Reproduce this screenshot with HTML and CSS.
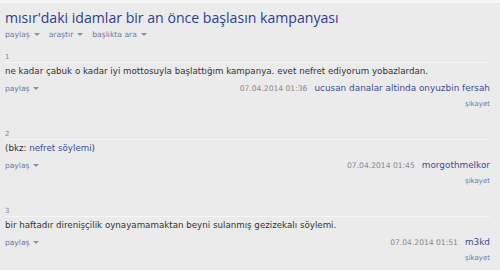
FILE: index.html
```html
<!DOCTYPE html>
<html>
  <head>
    <title>mısır'daki idamlar bir an önce başlasın kampanyası</title>
    <link rel="stylesheet" href="styles.css">
  </head>

  <body>
    <div class="topic">
      <h1 class="title">mısır'daki idamlar bir an önce başlasın kampanyası</h1>
      <div class="topic-nav">
        <span class="drop">paylaş</span>
        <span class="drop">araştır</span>
        <span class="drop">başlıkta ara</span>
      </div>

      <div class="entry">
        <div class="entry-num">1</div>
        <div class="entry-text">ne kadar çabuk o kadar iyi mottosuyla başlattığım kampanya. evet nefret ediyorum yobazlardan.</div>
        <div class="entry-footer">
          <span class="drop">paylaş</span>
          <div class="entry-info">
            <span class="date">07.04.2014 01:36</span>
            <span class="author">ucusan danalar altinda onyuzbin fersah</span>
          </div>
        </div>
        <div class="report">şikayet</div>
      </div>

      <div class="entry">
        <div class="entry-num">2</div>
        <div class="entry-text">(bkz: <span class="link">nefret söylemi</span>)</div>
        <div class="entry-footer">
          <span class="drop">paylaş</span>
          <div class="entry-info">
            <span class="date">07.04.2014 01:45</span>
            <span class="author">morgothmelkor</span>
          </div>
        </div>
        <div class="report">şikayet</div>
      </div>

      <div class="entry">
        <div class="entry-num">3</div>
        <div class="entry-text">bir haftadır direnişçilik oynayamamaktan beyni sulanmış gezizekalı söylemi.</div>
        <div class="entry-footer">
          <span class="drop">paylaş</span>
          <div class="entry-info">
            <span class="date">07.04.2014 01:51</span>
            <span class="author">m3kd</span>
          </div>
        </div>
        <div class="report">şikayet</div>
      </div>
    </div>
  </body>
</html>
```

FILE: styles.css
```css
* {
  box-sizing: border-box;
  margin: 0;
  padding: 0;
}

body {
  background: #ebebeb;
  border-top: 3px solid #f6f6f6;
  color: #333;
  font-family: "DejaVu Sans", Verdana, sans-serif;
  font-size: 9px;
}

.topic {
  padding: 5px 10px 0 5px;
}

.title {
  font-family: "Open Sans", sans-serif;
  font-size: 14.1px;
  font-weight: 400;
  color: #2e3d96;
  line-height: 20px;
}

.topic-nav {
  display: flex;
  gap: 9px;
  margin-top: 2px;
  font-size: 7.6px;
  color: #6b7aa8;
}

.drop::after {
  content: "";
  display: inline-block;
  margin-left: 4px;
  vertical-align: 1px;
  border-left: 3px solid transparent;
  border-right: 3px solid transparent;
  border-top: 3px solid #8090b8;
}

.entry {
  margin-top: 14px;
}

.entry + .entry {
  margin-top: 22px;
}

.entry-num {
  font-size: 7px;
  color: #888;
  padding-bottom: 1px;
  border-bottom: 1px solid #f5f5f5;
}

.entry-text {
  margin-top: 1.5px;
  font-size: 8.7px;
  line-height: 12px;
}

.link {
  color: #3d4c99;
}

.entry-footer {
  display: flex;
  justify-content: space-between;
  align-items: baseline;
  margin-top: 6px;
}

.entry-footer .drop {
  font-size: 7.5px;
  color: #6b7aa8;
}

.entry-info {
  display: flex;
  gap: 7px;
  align-items: baseline;
}

.date {
  font-size: 7.6px;
  color: #888;
}

.author {
  font-size: 8.9px;
  color: #3d4c99;
}

.report {
  margin-top: 7.5px;
  text-align: right;
  font-size: 7px;
  color: #6b7aa8;
}
```
